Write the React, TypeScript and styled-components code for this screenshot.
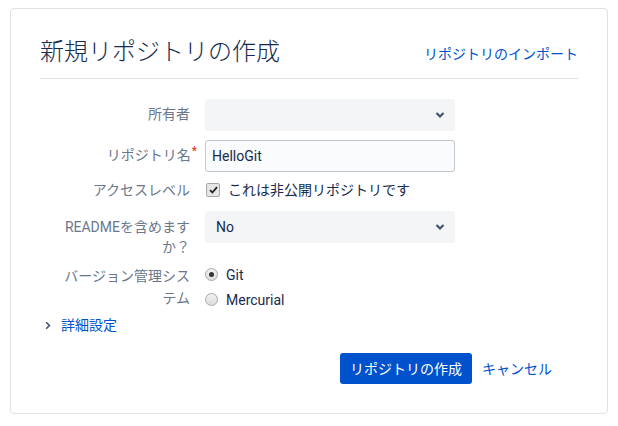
import styled, { createGlobalStyle } from 'styled-components';

const GlobalStyle = createGlobalStyle`
    html, body {
        margin: 0;
        padding: 0;
        background: #ffffff;
    }
    body {
        font-family: "Segoe UI", Roboto, "Noto Sans CJK JP", sans-serif;
        font-size: 14px;
        line-height: 20px;
        color: #172b4d;
    }
`;

const Card = styled.div`
    margin: 8px 10px 0;
    height: 406px;
    box-sizing: border-box;
    border: 1px solid #dfe1e6;
    border-radius: 4px;
    padding: 29px 29px;
`;

const Header = styled.div`
    display: flex;
    justify-content: space-between;
    align-items: center;
    padding-bottom: 12px;
    border-bottom: 1px solid #dfe1e6;
`;

const Title = styled.h1`
    margin: 0;
    font-size: 24px;
    line-height: 28px;
    font-weight: 300;
    color: #172b4d;
    font-family: "Segoe UI", Roboto, "Noto Sans CJK JP", sans-serif;
`;

const Link = styled.a`
    color: #0052cc;
    text-decoration: none;
    cursor: pointer;
`;

const HeaderLink = styled(Link)`
    margin-top: 3px;
`;

const Form = styled.form`
    padding: 20px 0 0 20px;
`;

const Row = styled.div<{ $gap: number }>`
    display: grid;
    grid-template-columns: 130px 250px;
    column-gap: 15px;
    margin-top: ${p => p.$gap}px;
`;

const Label = styled.label<{ $top?: number; $lh?: number }>`
    text-align: right;
    color: #6b778c;
    padding-top: ${p => p.$top ?? 5}px;
    line-height: ${p => p.$lh ?? 20}px;
`;

const Required = styled.span`
    color: #de350b;
    font-size: 12px;
    vertical-align: top;
    position: relative;
    top: -4px;
    margin-left: 1px;
    margin-right: -7px;
`;

const SelectBox = styled.div`
    height: 32px;
    box-sizing: border-box;
    background: #f4f5f7;
    border-radius: 3px;
    display: flex;
    align-items: center;
    justify-content: space-between;
    padding: 0 10px 0 11px;
    color: #172b4d;
`;

const TextInput = styled.div`
    height: 32px;
    box-sizing: border-box;
    background: #fafbfc;
    border: 1px solid #c1c7d0;
    border-radius: 3px;
    display: flex;
    align-items: center;
    padding: 0 6px;
    color: #172b4d;
`;

const CheckRow = styled.div`
    display: flex;
    align-items: center;
    gap: 8px;
    height: 20px;
`;

const CheckBox = styled.span`
    width: 12px;
    height: 12px;
    margin-left: 1px;
    border: 1px solid #a6a6a6;
    border-radius: 2px;
    background: #e6e6e6;
    display: flex;
    align-items: center;
    justify-content: center;
`;

const RadioList = styled.div`
    display: flex;
    flex-direction: column;
`;

const RadioRow = styled.div`
    display: flex;
    align-items: center;
    gap: 8px;
    height: 25px;
`;

const Radio = styled.span<{ $checked?: boolean }>`
    width: 11px;
    height: 11px;
    border-radius: 50%;
    border: 1px solid #a8a8a8;
    background: linear-gradient(#f2f2f2, #dcdcdc);
    display: flex;
    align-items: center;
    justify-content: center;

    &::after {
        content: '';
        display: ${p => (p.$checked ? 'block' : 'none')};
        width: 5px;
        height: 5px;
        border-radius: 50%;
        background: #333;
    }
`;

const Advanced = styled.div`
    display: flex;
    align-items: center;
    gap: 10px;
    margin-top: 3px;
    padding-left: 5px;
    height: 20px;
`;

const Buttons = styled.div`
    display: flex;
    align-items: center;
    justify-content: flex-end;
    gap: 10px;
    padding-right: 26px;
    margin-top: 18px;
`;

const PrimaryButton = styled.button`
    height: 31px;
    padding: 0 10px;
    background: #0052cc;
    color: #ffffff;
    border: none;
    border-radius: 3px;
    font: inherit;
    font-size: 14px;
    cursor: pointer;
`;

function ChevronDown() {
    return (
        <svg width="10" height="8" viewBox="0 0 10 8">
            <path d="M1.5 2 L5 5.5 L8.5 2" fill="none" stroke="#42526e" strokeWidth="2.2" />
        </svg>
    );
}

export default function App() {
    return (
        <>
            <GlobalStyle />
            <Card>
                <Header>
                    <Title>新規リポジトリの作成</Title>
                    <HeaderLink>リポジトリのインポート</HeaderLink>
                </Header>
                <Form>
                    <Row $gap={0}>
                        <Label>所有者</Label>
                        <SelectBox>
                            <span />
                            <ChevronDown />
                        </SelectBox>
                    </Row>
                    <Row $gap={9}>
                        <Label>
                            リポジトリ名<Required>*</Required>
                        </Label>
                        <TextInput>HelloGit</TextInput>
                    </Row>
                    <Row $gap={8}>
                        <Label $top={0}>アクセスレベル</Label>
                        <CheckRow>
                            <CheckBox>
                                <svg width="9" height="8" viewBox="0 0 9 8">
                                    <path d="M1 4.2 L3.4 6.5 L8 1.2" fill="none" stroke="#222" strokeWidth="1.8" />
                                </svg>
                            </CheckBox>
                            これは非公開リポジトリです
                        </CheckRow>
                    </Row>
                    <Row $gap={11}>
                        <Label $top={6}>READMEを含めますか？</Label>
                        <SelectBox>
                            <span>No</span>
                            <ChevronDown />
                        </SelectBox>
                    </Row>
                    <Row $gap={5}>
                        <Label $top={3} $lh={22}>バージョン管理システム</Label>
                        <RadioList>
                            <RadioRow>
                                <Radio $checked />
                                Git
                            </RadioRow>
                            <RadioRow>
                                <Radio />
                                Mercurial
                            </RadioRow>
                        </RadioList>
                    </Row>
                </Form>
                <Advanced>
                    <svg width="6" height="9" viewBox="0 0 6 9">
                        <path d="M1.2 1.2 L4.4 4.5 L1.2 7.8" fill="none" stroke="#42526e" strokeWidth="1.6" />
                    </svg>
                    <Link>詳細設定</Link>
                </Advanced>
                <Buttons>
                    <PrimaryButton>リポジトリの作成</PrimaryButton>
                    <Link>キャンセル</Link>
                </Buttons>
            </Card>
        </>
    );
}
